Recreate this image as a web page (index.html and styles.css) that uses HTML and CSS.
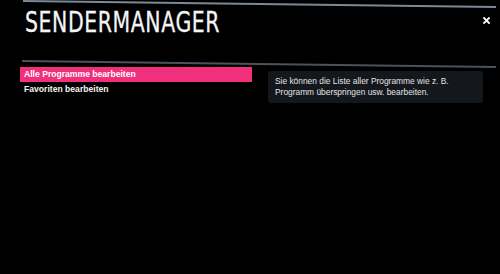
FILE: index.html
```html
<!DOCTYPE html>
<html lang="de">
<head>
<meta charset="utf-8">
<link rel="stylesheet" href="styles.css">
</head>
<body>
<div class="screen">
  <div class="topline"></div>
  <header class="head">
    <h1 class="title">SENDERMANAGER</h1>
    <span class="close" aria-label="Schließen">
      <svg width="7" height="7" viewBox="0 0 7 7"><path d="M1 1L6 6M6 1L1 6" stroke="#fff" stroke-width="1.8" stroke-linecap="square"/></svg>
    </span>
  </header>
  <div class="rule"></div>
  <main class="content">
    <ul class="menu">
      <li class="item active">Alle Programme bearbeiten</li>
      <li class="item">Favoriten bearbeiten</li>
    </ul>
    <div class="info">Sie können die Liste aller Programme wie z. B. Programm überspringen usw. bearbeiten.</div>
  </main>
</div>
</body>
</html>
```
FILE: styles.css
```css
html, body {
  margin: 0;
  padding: 0;
  background: #000;
}
body {
  width: 500px;
  height: 274px;
  overflow: hidden;
  font-family: "Liberation Sans", Arial, sans-serif;
}
.screen {
  display: flex;
  flex-direction: column;
  padding: 0;
}
.topline {
  margin-left: 23px;
  width: 473px;
  height: 2px;
  background: #7d8995;
  transform: rotate(0.73deg);
  transform-origin: left center;
}
.head {
  display: flex;
  align-items: flex-start;
  justify-content: space-between;
  padding: 5px 10px 0 25px;
  height: 55px;
  box-sizing: border-box;
}
.title {
  margin: 0;
  font-family: "DejaVu Sans", sans-serif;
  font-weight: normal;
  font-size: 28px;
  line-height: 32px;
  color: #f2f4f6;
  letter-spacing: 0.8px;
  transform: scaleX(0.73);
  transform-origin: left center;
  -webkit-text-stroke: 0.3px #f2f4f6;
}
.close {
  display: flex;
  margin-top: 10px;
}
.rule {
  margin: 3px 0 0 22px;
  width: 474px;
  height: 2px;
  background: #4a525b;
  transform: rotate(0.73deg);
  transform-origin: left center;
}
.content {
  display: flex;
  align-items: flex-start;
  padding: 5px 0 0 20px;
}
.menu {
  list-style: none;
  margin: 0;
  padding: 0;
  width: 232px;
}
.item {
  height: 15px;
  line-height: 15px;
  padding-left: 4px;
  font-size: 8.6px;
  font-weight: bold;
  color: #f4f4f4;
  margin-bottom: 0;
}
.item.active {
  background: #f0307c;
  color: #fff;
}
.info {
  margin: 4px 0 0 16px;
  width: 215px;
  height: 32px;
  box-sizing: border-box;
  padding: 5px 6px 0 7px;
  background: #14171b;
  border-radius: 3px;
  font-size: 8.4px;
  line-height: 10.5px;
  color: #e2e4e6;
}
```
